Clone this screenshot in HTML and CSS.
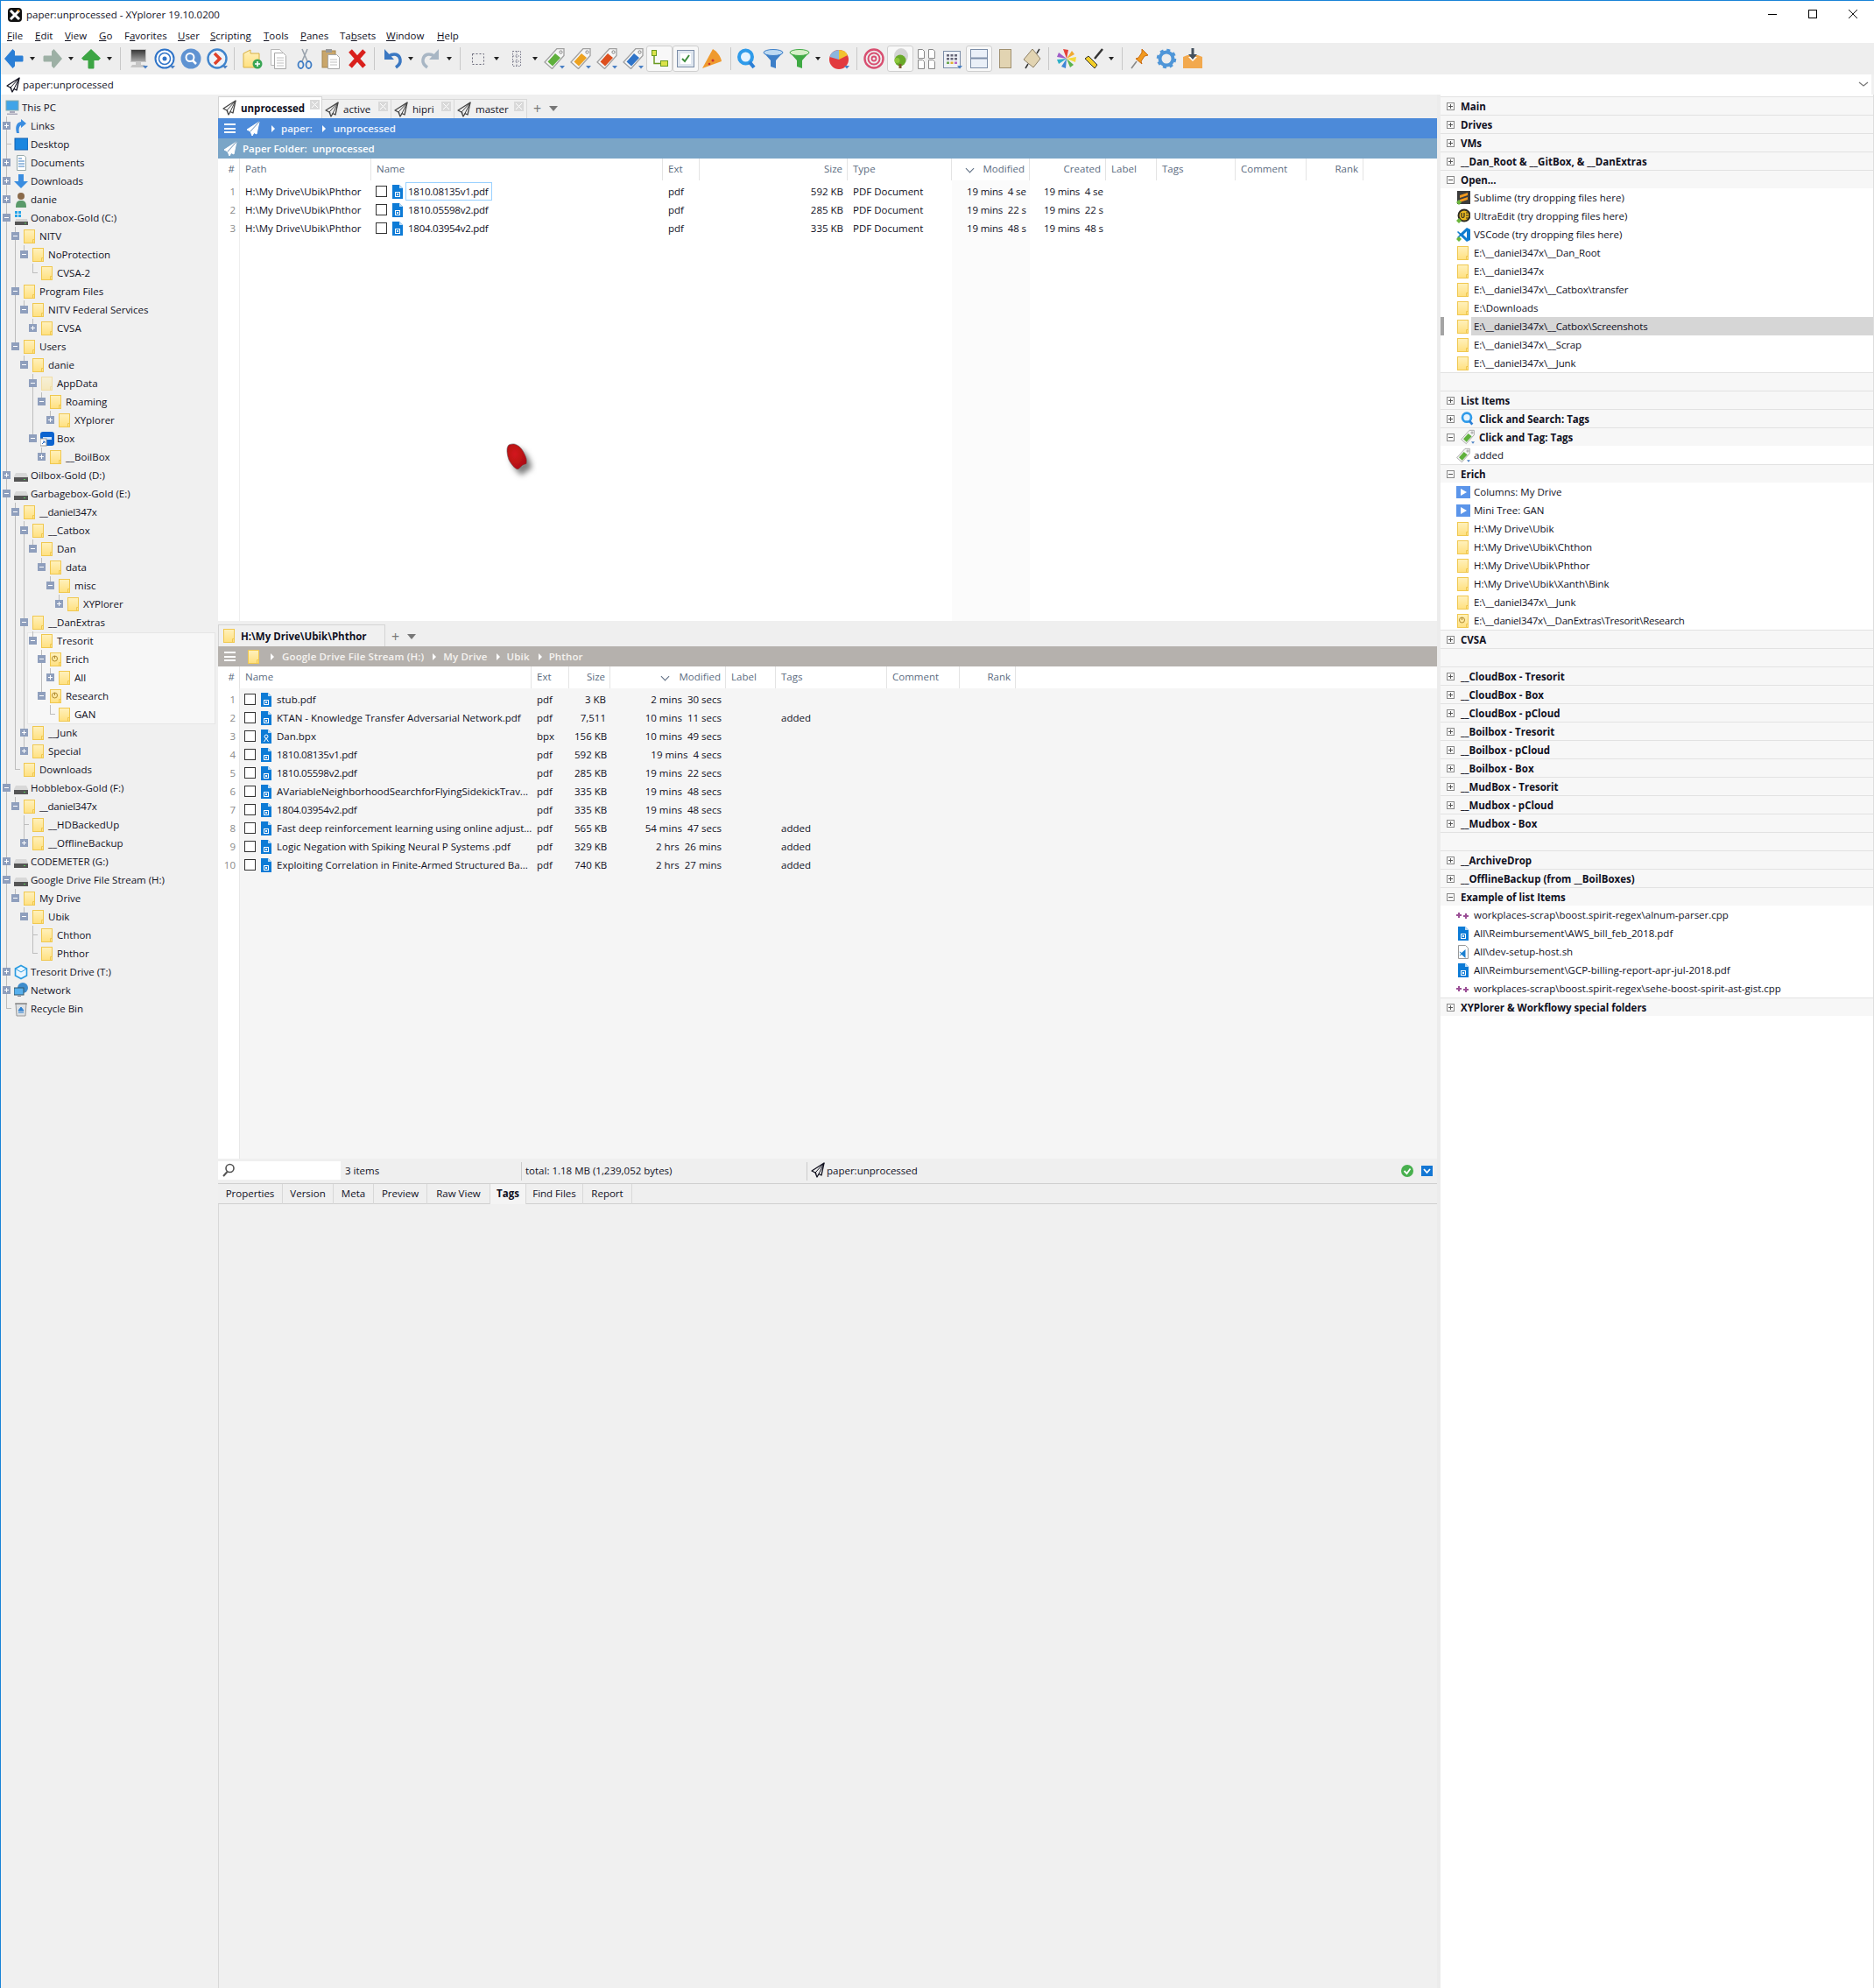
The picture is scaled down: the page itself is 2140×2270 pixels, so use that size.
FILE: index.html
```html
<!DOCTYPE html>
<html lang="en">
<head>
<meta charset="utf-8">
<title>paper:unprocessed - XYplorer 19.10.0200</title>
<link rel="stylesheet" href="styles.css">
</head>
<body>
<svg class="defs" xmlns="http://www.w3.org/2000/svg">
<defs>
<linearGradient id="fy" x1="0" y1="0" x2="0" y2="1"><stop offset="0" stop-color="#fff1bd"/><stop offset="1" stop-color="#ffe07f"/></linearGradient>
<linearGradient id="scr" x1="0" y1="0" x2="0" y2="1"><stop offset="0" stop-color="#333"/><stop offset="1" stop-color="#aaa"/></linearGradient>
<radialGradient id="blob" cx=".4" cy=".4" r=".7"><stop offset="0" stop-color="#d3151b"/><stop offset="1" stop-color="#a80f15"/></radialGradient>
<filter id="shade" x="-40%" y="-30%" width="190%" height="180%"><feDropShadow dx="5" dy="6" stdDeviation="3" flood-color="#000" flood-opacity=".5"/></filter>
<symbol id="folder" viewBox="0 0 16 18"><rect x="1.5" y="1.5" width="12" height="15" fill="url(#fy)" stroke="#f0c850"/><path d="M11.5 16.5v-4h2" fill="none" stroke="#f0c850"/></symbol>
<symbol id="lockf" viewBox="0 0 16 18"><rect x="1.5" y="1.5" width="12" height="15" fill="url(#fy)" stroke="#f0c850"/><path d="M11.5 16.5v-4h2" fill="none" stroke="#f0c850"/><circle cx="6.5" cy="8" r="3" fill="none" stroke="#b08a30"/><path d="M6.5 5v3" stroke="#b08a30"/></symbol>
<symbol id="pdf" viewBox="0 0 12 16"><path d="M0 0h8l4 4v12H0z" fill="#0d7bd6"/><path d="M8 0l4 4H8z" fill="#bcdcf6"/><rect x="3.5" y="8.5" width="5" height="5" fill="none" stroke="#fff"/><rect x="5" y="10" width="2" height="2" fill="#fff"/></symbol>
<symbol id="bpx" viewBox="0 0 12 16"><path d="M0 0h8l4 4v12H0z" fill="#0d7bd6"/><path d="M8 0l4 4H8z" fill="#bcdcf6"/><circle cx="6" cy="8" r="2" fill="none" stroke="#fff"/><path d="M3.500 14 6 10l2.500 4" fill="none" stroke="#fff"/></symbol>
<symbol id="plane" viewBox="0 0 16 18"><path d="M15 1 1 10l4 2 2 5 2-3.500 3 1.500z" fill="none" stroke="currentColor" stroke-width="1.300" stroke-linejoin="round"/><path d="M15 1 5 12l1.500 1M15 1 9 13.500" fill="none" stroke="currentColor"/></symbol>
<symbol id="planew" viewBox="0 0 16 18"><path d="M15 1 1 10l4 2 2 5 2-3.500 3 1.500z" fill="#fff" stroke="#fff" stroke-linejoin="round"/><path d="M15 1 5 12" fill="none" stroke="#6b8fb3"/></symbol>
<symbol id="back" viewBox="0 0 24 24"><path d="M1 12 10.500 1l2.500 2.500V8.500h8c1 0 1.500.5 1.500 1.500v4c0 1-.5 1.500-1.500 1.500h-8v5L10.500 23z" fill="#2b7fd6"/></symbol>
<symbol id="fwd" viewBox="0 0 24 24"><path d="M23 12 13.500 1 11 3.500V8.500H3c-1 0-1.500.5-1.500 1.500v4c0 1 .5 1.500 1.500 1.500h8v5l2.500 2.500z" fill="#9db0a5"/></symbol>
<symbol id="up" viewBox="0 0 24 24"><path d="M12 1 1 11.500 3.500 14H8.500v8c0 1 .5 1.500 1.500 1.500h4c1 0 1.500-.5 1.500-1.500v-8h5l2.500-2.500z" fill="#3ca544"/></symbol>
<symbol id="mon" viewBox="0 0 24 24"><rect x="3.500" y="1.500" width="17" height="14" fill="url(#scr)" stroke="#c8c8c8"/><path d="M9 16h6v3H9zM5 19h14l2 3H3z" fill="#c6c6c6"/><path d="M17 20h6l-3 3.500z" fill="#4a80c4"/></symbol>
<symbol id="tgt" viewBox="0 0 24 24"><circle cx="12" cy="12" r="10.500" fill="#fff" stroke="#2f74c8" stroke-width="2"/><circle cx="12" cy="12" r="6.500" fill="none" stroke="#2f74c8" stroke-width="1.500"/><circle cx="12" cy="12" r="2.500" fill="#2f74c8"/><path d="M18 20h6l-3 3.500z" fill="#4a80c4"/></symbol>
<symbol id="qc" viewBox="0 0 24 24"><circle cx="12" cy="12" r="11.500" fill="#5f93d2"/><circle cx="11" cy="10.500" r="4.500" fill="none" stroke="#fff" stroke-width="2"/><path d="M14 14l4 4" stroke="#fff" stroke-width="2.500"/></symbol>
<symbol id="rc" viewBox="0 0 24 24"><circle cx="12" cy="12" r="10.500" fill="#eef3f9" stroke="#3f84cc" stroke-width="2.400"/><path d="M9 6l6 6-6 6" fill="none" stroke="#e0412a" stroke-width="3.500"/><path d="M18 20h6l-3 3.500z" fill="#4a80c4"/></symbol>
<symbol id="nf" viewBox="0 0 24 24"><path d="M2 6l8-4v4h10v16H2z" fill="url(#fy)" stroke="#d8b040"/><circle cx="18" cy="18" r="5.500" fill="#3aa655"/><path d="M18 15v6M15 18h6" stroke="#fff" stroke-width="1.600"/></symbol>
<symbol id="copy" viewBox="0 0 24 24"><path d="M3.500 1.500h10l3 3v15h-13z" fill="#fff" stroke="#b8b8b8"/><path d="M7.500 5.500h10l3 3v15h-13z" fill="#fff" stroke="#a8a8a8"/><path d="M10 11h8M10 14h8M10 17h8M10 20h8" stroke="#c0c0c0"/></symbol>
<symbol id="cut" viewBox="0 0 24 24"><path d="M15 1 9 15M9 1l6 14" stroke="#9aa3ad" stroke-width="1.600"/><ellipse cx="7.500" cy="19" rx="3" ry="4" fill="none" stroke="#3e7cc4" stroke-width="1.800"/><ellipse cx="16.500" cy="19" rx="3" ry="4" fill="none" stroke="#3e7cc4" stroke-width="1.800"/></symbol>
<symbol id="paste" viewBox="0 0 24 24"><rect x="2" y="3" width="15" height="19" fill="#c9a66b" stroke="#a58650"/><rect x="6" y="1" width="7" height="4" fill="#999"/><path d="M8.500 7.500h10l3 3v13h-13z" fill="#fff" stroke="#a8a8a8"/><path d="M11 13h8M11 16h8M11 19h8" stroke="#c0c0c0"/></symbol>
<symbol id="del" viewBox="0 0 24 24"><path d="M4 3 20 21M20 3 4 21" stroke="#d9201c" stroke-width="5"/></symbol>
<symbol id="undo" viewBox="0 0 24 24"><path d="M8 9c6-4 12-2 13 4 .6 4-2 7-5 9" fill="none" stroke="#3b78c2" stroke-width="3.500"/><path d="M3 1v12h11z" fill="#3b78c2"/></symbol>
<symbol id="redo" viewBox="0 0 24 24"><path d="M16 9c-6-4-12-2-13 4-.6 4 2 7 5 9" fill="none" stroke="#a8b6c4" stroke-width="3.500"/><path d="M21 1v12H10z" fill="#a8b6c4"/></symbol>
<symbol id="sel" viewBox="0 0 24 24"><rect x="5.500" y="6.500" width="13" height="12" fill="none" stroke="#667" stroke-dasharray="2 2"/></symbol>
<symbol id="sgrid" viewBox="0 0 24 24"><path d="M7.500 3.500h9v17h-9zM7.500 9h9M7.500 15h9M12 3.500v17" fill="none" stroke="#778" stroke-dasharray="1.500 1.500"/></symbol>
<symbol id="tag" viewBox="0 0 24 24"><path d="M15 .5h8v8L9.500 23.500 1 16z" fill="#f6f6f6" stroke="#a0a0a0" stroke-width="1.300"/><path d="M13 6l6 5-9 9.500-5.500-5z" fill="currentColor"/><circle cx="19.500" cy="4.500" r="1.600" fill="#fff" stroke="#777"/><path d="M18 20h6l-3 3.500z" fill="#4a80c4"/></symbol>
<symbol id="nodes" viewBox="0 0 24 24"><rect x="3.500" y="2.500" width="5" height="6" fill="#dbe24a" stroke="#6a9a20"/><rect x="13.500" y="14.500" width="8" height="6" fill="#dbe24a" stroke="#6a9a20"/><path d="M6 9v8.500h7" fill="none" stroke="#6a9a20" stroke-width="1.500"/></symbol>
<symbol id="chk" viewBox="0 0 24 24"><rect x="2.500" y="2.500" width="19" height="19" fill="#dfe6ef" stroke="#7c8ea8"/><rect x="6" y="6" width="12" height="12" fill="#fff"/><path d="M8 12l3 3 5-7" fill="none" stroke="#3c8c3c" stroke-width="2"/></symbol>
<symbol id="piz" viewBox="0 0 24 24"><path d="M1 23 13 1c5 3 9 8 10 14z" fill="#ef9a2e"/><circle cx="13" cy="14" r="1.500" fill="#c33"/><circle cx="9" cy="18" r="1.300" fill="#c33"/></symbol>
<symbol id="find" viewBox="0 0 24 24"><circle cx="10.500" cy="10" r="7.500" fill="#e6f4ff" stroke="#2f9bea" stroke-width="4"/><path d="M15 16l5 6" stroke="#2b7fd6" stroke-width="4"/></symbol>
<symbol id="fb" viewBox="0 0 24 24"><path d="M1 5h22l-8 9v9l-6-2v-7z" fill="#3d7fc8"/><ellipse cx="12" cy="5" rx="11" ry="3.500" fill="#bcd9f2" stroke="#3d7fc8"/></symbol>
<symbol id="fg" viewBox="0 0 24 24"><path d="M1 5h22l-8 9v9l-6-2v-7z" fill="#3faa44"/><ellipse cx="12" cy="5" rx="11" ry="3.500" fill="#d6f0c8" stroke="#3faa44"/></symbol>
<symbol id="pie" viewBox="0 0 24 24"><circle cx="12" cy="13" r="11" fill="#e23a3e"/><path d="M12 13V2a11 9 0 0 1 10 6z" fill="#f2c230"/><path d="M12 13 1.500 10A11 9 0 0 1 12 2z" fill="#8cb6de"/><path d="M18 20h6l-3 3.500z" fill="#4a80c4"/></symbol>
<symbol id="spi" viewBox="0 0 24 24"><circle cx="12" cy="12" r="10.500" fill="none" stroke="#d84e70" stroke-width="2.400"/><circle cx="12" cy="12" r="6.500" fill="none" stroke="#d84e70" stroke-width="2"/><circle cx="12" cy="12" r="2.500" fill="none" stroke="#d84e70" stroke-width="1.800"/></symbol>
<symbol id="trees" viewBox="0 0 24 24"><ellipse cx="13" cy="9" rx="8" ry="9" fill="#d4d4d4"/><circle cx="12" cy="14" r="6.500" fill="#69a928"/><circle cx="8.500" cy="14" r="3" fill="#8cc63c"/><rect x="10.500" y="18" width="3" height="5" fill="#7b5a2c"/></symbol>
<symbol id="pages" viewBox="0 0 24 24"><path d="M2.500 1.500h5l2 2v8h-7zM14.500 1.500h5l2 2v8h-7zM2.500 13.500h5l2 2v8h-7zM14.500 13.500h5l2 2v8h-7z" fill="#fff" stroke="#888"/></symbol>
<symbol id="cgrid" viewBox="0 0 24 24"><rect x="1.500" y="3.500" width="19" height="19" fill="#eef1f6" stroke="#7c8ea8"/><path d="M5 7h3v2.500H5zM9.500 7h3v2.500h-3zM14 7h3v2.500h-3zM5 11h3v2.500H5zM9.500 11h3v2.500h-3zM14 11h3v2.500h-3z" fill="#667"/><path d="M5 15.500h3V18H5z" fill="#6aa84f"/><path d="M9.500 15.500h3V18h-3z" fill="#e0b030"/><path d="M14 15.500h3V18h-3z" fill="#b565c8"/><path d="M17 20h6l-3 3.500z" fill="#4a80c4"/></symbol>
<symbol id="panes" viewBox="0 0 24 24"><rect x="2.500" y="1.500" width="19" height="21" fill="#eaf0f8" stroke="#7c8ea8"/><path d="M2.500 11.500h19" stroke="#7c8ea8" stroke-width="2"/></symbol>
<symbol id="bei" viewBox="0 0 24 24"><rect x="5.500" y="1.500" width="13" height="21" fill="#e2d4b2" stroke="#a09070"/></symbol>
<symbol id="rot" viewBox="0 0 24 24"><path d="M13 1l9 11-8 10L3 13z" fill="#e2d4b2" stroke="#8d8065"/><path d="M21 1l-3 5M5 23l3-5" stroke="#333" stroke-width="1.500"/></symbol>
<symbol id="wheel" viewBox="0 0 24 24"><path d="M12 12 8 1l6 1z" fill="#e4433a"/><path d="M12 12l6-9 3 4z" fill="#f0a92f"/><path d="M12 12l11-2-1 6z" fill="#f4d93c"/><path d="M12 12l8 7-4 3z" fill="#5ab24b"/><path d="M12 12l-1 11-5-2z" fill="#3f86d6"/><path d="M12 12 3 18l-2-5z" fill="#2fb0c8"/><path d="M12 12 1 10l2-5z" fill="#a05cc8"/></symbol>
<symbol id="brush" viewBox="0 0 24 24"><path d="M23 1 14 12" stroke="#333" stroke-width="2.500"/><path d="M3 12 7 9l10 10-3 4z" fill="#f2cd28" stroke="#333"/></symbol>
<symbol id="pin" viewBox="0 0 24 24"><path d="M14 1l7 7-4 1-4 6 1 3-7-6 3-1 4-6z" fill="#f29a1e" stroke="#c86a10"/><path d="M8 15 2 23" stroke="#888" stroke-width="1.500"/></symbol>
<symbol id="gear" viewBox="0 0 24 24"><circle cx="12" cy="12" r="7.500" fill="none" stroke="#4f96d8" stroke-width="4"/><circle cx="12" cy="12" r="10" fill="none" stroke="#4f96d8" stroke-width="2.500" stroke-dasharray="4 3.850"/></symbol>
<symbol id="dbox" viewBox="0 0 24 24"><path d="M1 10l5-2h12l5 2v13H1z" fill="#f2a94e"/><path d="M7 10h10l-5 5z" fill="#fff"/><path d="M10.500 0h3v7H17l-5 6-5-6h3.500z" fill="#44515e"/></symbol>
<symbol id="pc" viewBox="0 0 16 18"><rect x="1" y="1" width="14" height="11" fill="#3fa4e8" stroke="#8aa"/><path d="M5 13h6v2H5zM2 15.500h12v1.500H2z" fill="#aab"/></symbol>
<symbol id="links" viewBox="0 0 16 18"><path d="M3 17c-2-8 0-12 5-13V1l6 5-6 5V8c-2 1-3 4-2 9z" fill="#3a8de0"/></symbol>
<symbol id="desk" viewBox="0 0 16 18"><rect x="1" y="2" width="15" height="13" fill="#1a86e0" stroke="#0e5fb0"/></symbol>
<symbol id="docs" viewBox="0 0 16 18"><path d="M3.500 .5h8l2 2v15h-10z" fill="#fff" stroke="#9aa"/><path d="M5 4h4M5 7h7M5 10h7M5 13h7" stroke="#3a7cc0"/></symbol>
<symbol id="down" viewBox="0 0 16 18"><path d="M5 1h6v8h5l-8 8-8-8h5z" fill="#3a8de0"/></symbol>
<symbol id="user" viewBox="0 0 16 18"><circle cx="8" cy="5" r="4" fill="#8a6a4a"/><path d="M2 18c0-7 2-8 6-8s6 1 6 8z" fill="#5a9a6a"/></symbol>
<symbol id="sys" viewBox="0 0 16 18"><path d="M2 10h13l1 4v3H1v-3z" fill="#d4d4d4"/><rect x="1" y="13" width="15" height="4" fill="#555"/><rect x="12" y="14.500" width="2" height="1" fill="#5c5"/><path d="M1 1h3v3H1zM5 1h3v3H5zM1 5h3v3H1zM5 5h3v3H5z" fill="#27a4e8"/></symbol>
<symbol id="drv" viewBox="0 0 16 18"><path d="M2 6h12l2 4v6H0v-6z" fill="#d8d8d8"/><rect x="0" y="11" width="16" height="5" fill="#555"/><rect x="11" y="13" width="2" height="1" fill="#5c5"/></symbol>
<symbol id="box" viewBox="0 0 16 18"><rect x="0" y="1" width="16" height="16" rx="3" fill="#0b63cf"/><path d="M3 7h10v3H3z" fill="#cfe3fa"/><rect x="0" y="9" width="7" height="8" fill="#fff" stroke="#999"/><path d="M2 15l3-3M3 12h2v2" fill="none" stroke="#2a6ac0"/></symbol>
<symbol id="hex" viewBox="0 0 16 18"><path d="M8 1.500 14.500 5v8L8 16.500 1.500 13V5z" fill="#eaf6ff" stroke="#2a9be0" stroke-width="1.600"/><path d="M1.500 5 8 9l6.500-4" fill="none" stroke="#2a9be0"/></symbol>
<symbol id="net" viewBox="0 0 16 18"><circle cx="10" cy="6" r="6" fill="#3d8ccc"/><rect x="0" y="6" width="11" height="8" fill="#57b0ee" stroke="#356"/><path d="M4 15h4v1H4z" fill="#889"/></symbol>
<symbol id="bin" viewBox="0 0 16 18"><path d="M2 3h12l-1 14H3z" fill="#dce0e4" stroke="#999"/><path d="M1 3h14" stroke="#777"/><path d="M8 7l3 4H5zM5 13h6" fill="#2a7ed0" stroke="#2a7ed0"/></symbol>
<symbol id="subl" viewBox="0 0 16 18"><rect x="1" y="1" width="15" height="15" fill="#3c3c3c"/><path d="M4 6 13 3v3L4 9zM13 8v3l-9 3v-3z" fill="#f39a1e"/><path d="M0 14l3-3 3 3-3 3z" fill="#6bb53c"/></symbol>
<symbol id="ue" viewBox="0 0 16 18"><circle cx="9" cy="8" r="7.500" fill="#2d2a20"/><circle cx="9" cy="8" r="5.500" fill="#e8b820"/><path d="M6 5v4c0 2 3 2 3 0V5M11 5h3M11 8h3M11 11h3" fill="none" stroke="#2d2a20" stroke-width="1.200"/><path d="M0 14l3-3 3 3-3 3z" fill="#6bb53c"/></symbol>
<symbol id="vsc" viewBox="0 0 16 18"><path d="M12 1l4 2v12l-4 2L5 10.500 2 13l-1-1 3-3-3-3 1-1 3 2.500z" fill="#0f7cd0"/><path d="M12 5 8 9l4 4z" fill="#fff"/><path d="M0 14l3-3 3 3-3 3z" fill="#6bb53c"/></symbol>
<symbol id="play" viewBox="0 0 16 18"><rect x="0" y="2" width="16" height="14" fill="#5b95ea"/><path d="M5 5l7 4-7 4z" fill="#fff"/></symbol>
<symbol id="cpp" viewBox="0 0 16 18"><path d="M2 6h2v2h2v2H4v2H2v-2H0V8h2zM10 7h2v2h2v2h-2v2h-2v-2H8V9h2z" fill="#9b4f96"/></symbol>
<symbol id="sh" viewBox="0 0 12 16"><path d="M.5.500h8l3 3v12H.5z" fill="#fff" stroke="#999"/><path d="M8.500 5 4 9l-2-1.500L1.500 8 3.500 10l-2 2 .5.500 2-1.500 4.500 4z" fill="#1a7fd0"/></symbol>
<symbol id="xy" viewBox="0 0 16 16"><rect width="16" height="16" rx="4" fill="#111"/><path d="M3 3l10 10M13 3 3 13" stroke="#fff" stroke-width="3"/><path d="M10 2h3v3z" fill="#e89020"/></symbol>
</defs>
</svg>

<div class="app">
  <header class="title">
    <svg class="logo"><use href="#xy"/></svg>
    <span class="ttext">paper:unprocessed - XYplorer 19.10.0200</span>
    <div class="wins">
      <svg class="wbtn"><path d="M0 5.500h10" stroke="#000"/></svg>
      <svg class="wbtn"><rect x=".5" y=".5" width="9" height="9" fill="none" stroke="#000"/></svg>
      <svg class="wbtn"><path d="M0 0l10 10M10 0 0 10" stroke="#111"/></svg>
    </div>
  </header>
  <nav class="menu">
    <span><u>F</u>ile</span><span><u>E</u>dit</span><span><u>V</u>iew</span><span><u>G</u>o</span><span>F<u>a</u>vorites</span><span><u>U</u>ser</span><span><u>S</u>cripting</span><span><u>T</u>ools</span><span><u>P</u>anes</span><span>Ta<u>b</u>sets</span><span><u>W</u>indow</span><span><u>H</u>elp</span>
  </nav>
  <div class="tools">
    <b class="c"><svg><use href="#back"/></svg></b><i class="dd"></i>
    <b class="c g"><svg><use href="#fwd"/></svg></b><i class="dd"></i>
    <b class="c g"><svg><use href="#up"/></svg></b><i class="dd"></i><i class="sp w12"></i>
    <b class="c"><svg><use href="#mon"/></svg></b><b class="c"><svg><use href="#tgt"/></svg></b><b class="c"><svg><use href="#qc"/></svg></b><b class="c"><svg><use href="#rc"/></svg></b><i class="sp"></i>
    <b class="c g"><svg><use href="#nf"/></svg></b><b class="c"><svg><use href="#copy"/></svg></b><b class="c"><svg><use href="#cut"/></svg></b><b class="c"><svg><use href="#paste"/></svg></b><b class="c"><svg><use href="#del"/></svg></b><i class="sp"></i>
    <b class="c g"><svg><use href="#undo"/></svg></b><i class="dd"></i>
    <b class="c g"><svg><use href="#redo"/></svg></b><i class="dd"></i><i class="sp w12"></i>
    <b class="c"><svg><use href="#sel"/></svg></b><i class="dd"></i>
    <b class="c g"><svg><use href="#sgrid"/></svg></b><i class="dd"></i>
    <b class="c h1 tg"><svg><use href="#tag"/></svg></b><b class="c to"><svg><use href="#tag"/></svg></b><b class="c tr"><svg><use href="#tag"/></svg></b><b class="c tb"><svg><use href="#tag"/></svg></b>
    <b class="c on"><svg><use href="#nodes"/></svg></b><b class="c on"><svg><use href="#chk"/></svg></b><b class="c"><svg><use href="#piz"/></svg></b><i class="sp g"></i>
    <b class="c"><svg><use href="#find"/></svg></b><b class="c"><svg><use href="#fb"/></svg></b><b class="c"><svg><use href="#fg"/></svg></b><i class="dd"></i>
    <b class="c h3"><svg><use href="#pie"/></svg></b><i class="sp w10"></i>
    <b class="c"><svg><use href="#spi"/></svg></b><b class="c on"><svg><use href="#trees"/></svg></b><b class="c"><svg><use href="#pages"/></svg></b><b class="c"><svg><use href="#cgrid"/></svg></b><b class="c on"><svg><use href="#panes"/></svg></b><b class="c"><svg><use href="#bei"/></svg></b><b class="c"><svg><use href="#rot"/></svg></b><i class="sp"></i>
    <b class="c g"><svg><use href="#wheel"/></svg></b><b class="c"><svg><use href="#brush"/></svg></b><i class="dd"></i><i class="sp w12"></i>
    <b class="c"><svg><use href="#pin"/></svg></b><b class="c"><svg><use href="#gear"/></svg></b><b class="c"><svg><use href="#dbox"/></svg></b>
  </div>
  <div class="addr">
    <svg class="ic"><use href="#plane"/></svg><span>paper:unprocessed</span>
    <svg class="chev"><path d="M1 1l5 4 5-4" fill="none" stroke="#777" stroke-width="1.300"/></svg>
  </div>
  <main class="main">
    <aside class="tree">
      <div class="hl"></div>
      <div class="n"><svg class="ic"><use href="#pc"/></svg><span>This PC</span></div>
      <div class="n"><b class="p"></b><svg class="ic"><use href="#links"/></svg><span>Links</span></div>
      <div class="n"><b class="t"></b><svg class="ic"><use href="#desk"/></svg><span>Desktop</span></div>
      <div class="n"><b class="p"></b><svg class="ic"><use href="#docs"/></svg><span>Documents</span></div>
      <div class="n"><b class="p"></b><svg class="ic"><use href="#down"/></svg><span>Downloads</span></div>
      <div class="n"><b class="p"></b><svg class="ic"><use href="#user"/></svg><span>danie</span></div>
      <div class="n"><b class="m"></b><svg class="ic"><use href="#sys"/></svg><span>Oonabox-Gold (C:)</span></div>
      <div class="n"><i class="v"></i><b class="m"></b><svg class="ic"><use href="#folder"/></svg><span>NITV</span></div>
      <div class="n"><i class="v"></i><i class="v"></i><b class="lm"></b><svg class="ic"><use href="#folder"/></svg><span>NoProtection</span></div>
      <div class="n"><i class="v"></i><i class="v"></i><i></i><b class="l"></b><svg class="ic"><use href="#folder"/></svg><span>CVSA-2</span></div>
      <div class="n"><i class="v"></i><b class="m"></b><svg class="ic"><use href="#folder"/></svg><span>Program Files</span></div>
      <div class="n"><i class="v"></i><i class="v"></i><b class="lm"></b><svg class="ic"><use href="#folder"/></svg><span>NITV Federal Services</span></div>
      <div class="n"><i class="v"></i><i class="v"></i><i></i><b class="lp"></b><svg class="ic"><use href="#folder"/></svg><span>CVSA</span></div>
      <div class="n"><i class="v"></i><b class="lm"></b><svg class="ic"><use href="#folder"/></svg><span>Users</span></div>
      <div class="n"><i class="v"></i><i></i><b class="lm"></b><svg class="ic"><use href="#folder"/></svg><span>danie</span></div>
      <div class="n"><i class="v"></i><i></i><i></i><b class="m"></b><svg class="ic faded"><use href="#folder"/></svg><span>AppData</span></div>
      <div class="n"><i class="v"></i><i></i><i></i><i class="v"></i><b class="lm"></b><svg class="ic"><use href="#folder"/></svg><span>Roaming</span></div>
      <div class="n"><i class="v"></i><i></i><i></i><i class="v"></i><i></i><b class="lp"></b><svg class="ic"><use href="#folder"/></svg><span>XYplorer</span></div>
      <div class="n"><i class="v"></i><i></i><i></i><b class="lm"></b><svg class="ic"><use href="#box"/></svg><span>Box</span></div>
      <div class="n"><i class="v"></i><i></i><i></i><i></i><b class="lp"></b><svg class="ic"><use href="#folder"/></svg><span>__BoilBox</span></div>
      <div class="n"><b class="p"></b><svg class="ic"><use href="#drv"/></svg><span>Oilbox-Gold (D:)</span></div>
      <div class="n"><b class="m"></b><svg class="ic"><use href="#drv"/></svg><span>Garbagebox-Gold (E:)</span></div>
      <div class="n"><i class="v"></i><b class="m"></b><svg class="ic"><use href="#folder"/></svg><span class="dg">__daniel347x</span></div>
      <div class="n"><i class="v"></i><i class="v"></i><b class="m"></b><svg class="ic"><use href="#folder"/></svg><span>__Catbox</span></div>
      <div class="n"><i class="v"></i><i class="v"></i><i class="v"></i><b class="lm"></b><svg class="ic"><use href="#folder"/></svg><span>Dan</span></div>
      <div class="n"><i class="v"></i><i class="v"></i><i class="v"></i><i></i><b class="lm"></b><svg class="ic"><use href="#folder"/></svg><span>data</span></div>
      <div class="n"><i class="v"></i><i class="v"></i><i class="v"></i><i></i><i></i><b class="lm"></b><svg class="ic"><use href="#folder"/></svg><span>misc</span></div>
      <div class="n"><i class="v"></i><i class="v"></i><i class="v"></i><i></i><i></i><i></i><b class="lp"></b><svg class="ic"><use href="#folder"/></svg><span>XYPlorer</span></div>
      <div class="n"><i class="v"></i><i class="v"></i><b class="m"></b><svg class="ic"><use href="#folder"/></svg><span>__DanExtras</span></div>
      <div class="n"><i class="v"></i><i class="v"></i><i class="v"></i><b class="lm"></b><svg class="ic"><use href="#folder"/></svg><span>Tresorit</span></div>
      <div class="n"><i class="v"></i><i class="v"></i><i class="v"></i><i></i><b class="m"></b><svg class="ic"><use href="#lockf"/></svg><span>Erich</span></div>
      <div class="n"><i class="v"></i><i class="v"></i><i class="v"></i><i></i><i class="v"></i><b class="lp"></b><svg class="ic"><use href="#folder"/></svg><span>All</span></div>
      <div class="n"><i class="v"></i><i class="v"></i><i class="v"></i><i></i><b class="lm"></b><svg class="ic"><use href="#lockf"/></svg><span>Research</span></div>
      <div class="n"><i class="v"></i><i class="v"></i><i class="v"></i><i></i><i></i><b class="l"></b><svg class="ic"><use href="#folder"/></svg><span>GAN</span></div>
      <div class="n"><i class="v"></i><i class="v"></i><b class="p"></b><svg class="ic"><use href="#folder"/></svg><span>__Junk</span></div>
      <div class="n"><i class="v"></i><i class="v"></i><b class="lp"></b><svg class="ic"><use href="#folder"/></svg><span>Special</span></div>
      <div class="n"><i class="v"></i><b class="l"></b><svg class="ic"><use href="#folder"/></svg><span>Downloads</span></div>
      <div class="n"><b class="m"></b><svg class="ic"><use href="#drv"/></svg><span>Hobblebox-Gold (F:)</span></div>
      <div class="n"><i class="v"></i><b class="lm"></b><svg class="ic"><use href="#folder"/></svg><span class="dg">__daniel347x</span></div>
      <div class="n"><i class="v"></i><i></i><b class="t"></b><svg class="ic"><use href="#folder"/></svg><span>__HDBackedUp</span></div>
      <div class="n"><i class="v"></i><i></i><b class="lp"></b><svg class="ic"><use href="#folder"/></svg><span>__OfflineBackup</span></div>
      <div class="n"><b class="p"></b><svg class="ic"><use href="#drv"/></svg><span>CODEMETER (G:)</span></div>
      <div class="n"><b class="m"></b><svg class="ic"><use href="#drv"/></svg><span>Google Drive File Stream (H:)</span></div>
      <div class="n"><i class="v"></i><b class="lm"></b><svg class="ic"><use href="#folder"/></svg><span>My Drive</span></div>
      <div class="n"><i class="v"></i><i></i><b class="lm"></b><svg class="ic"><use href="#folder"/></svg><span>Ubik</span></div>
      <div class="n"><i class="v"></i><i></i><i></i><b class="t"></b><svg class="ic"><use href="#folder"/></svg><span>Chthon</span></div>
      <div class="n"><i class="v"></i><i></i><i></i><b class="l"></b><svg class="ic"><use href="#folder"/></svg><span>Phthor</span></div>
      <div class="n"><b class="p"></b><svg class="ic"><use href="#hex"/></svg><span>Tresorit Drive (T:)</span></div>
      <div class="n"><b class="p"></b><svg class="ic"><use href="#net"/></svg><span>Network</span></div>
      <div class="n"><b class="l"></b><svg class="ic"><use href="#bin"/></svg><span>Recycle Bin</span></div>
    </aside>

    <section class="center">
      <div class="tabs">
        <div class="tab act w1"><svg class="ic"><use href="#plane"/></svg><span>unprocessed</span><em class="x"></em></div>
        <div class="tab w2"><svg class="ic"><use href="#plane"/></svg><span>active</span><em class="x"></em></div>
        <div class="tab w3"><svg class="ic"><use href="#plane"/></svg><span>hipri</span><em class="x"></em></div>
        <div class="tab w4"><svg class="ic"><use href="#plane"/></svg><span>master</span><em class="x"></em></div>
        <span class="plus">+</span><i class="tri"></i>
      </div>
      <div class="bar blue">
        <i class="burger"></i><svg class="ic b1"><use href="#planew"/></svg>
        <i class="ar a1"></i><span class="s1">paper:</span><i class="ar a2"></i><span class="s2">unprocessed</span>
      </div>
      <div class="bar steel"><svg class="ic b2"><use href="#planew"/></svg><span>Paper Folder:&nbsp; unprocessed</span></div>
      <div class="hdr g1">
        <span class="r">#</span><span>Path</span><span>Name</span><span>Ext</span><span class="r">Size</span><span>Type</span><span class="r srt">Modified</span><span class="r">Created</span><span>Label</span><span>Tags</span><span>Comment</span><span class="r">Rank</span>
      </div>
      <div class="list one">
        <div class="row g1"><span class="num">1</span><span>H:\My Drive\Ubik\Phthor</span><span class="nm"><i class="cb"></i><svg class="doc"><use href="#pdf"/></svg><span class="foc dg">1810.08135v1.pdf</span></span><span>pdf</span><span class="r">592 KB</span><span>PDF Document</span><span class="mod">19 mins&nbsp; 4 se</span><span class="cre">19 mins&nbsp; 4 se</span></div>
        <div class="row g1"><span class="num">2</span><span>H:\My Drive\Ubik\Phthor</span><span class="nm"><i class="cb"></i><svg class="doc"><use href="#pdf"/></svg><span class="dg">1810.05598v2.pdf</span></span><span>pdf</span><span class="r">285 KB</span><span>PDF Document</span><span class="mod">19 mins&nbsp; 22 s</span><span class="cre">19 mins&nbsp; 22 s</span></div>
        <div class="row g1"><span class="num">3</span><span>H:\My Drive\Ubik\Phthor</span><span class="nm"><i class="cb"></i><svg class="doc"><use href="#pdf"/></svg><span class="dg">1804.03954v2.pdf</span></span><span>pdf</span><span class="r">335 KB</span><span>PDF Document</span><span class="mod">19 mins&nbsp; 48 s</span><span class="cre">19 mins&nbsp; 48 s</span></div>
      </div>
      <div class="tabs two">
        <div class="tab act w5"><svg class="ic"><use href="#folder"/></svg><span>H:\My Drive\Ubik\Phthor</span></div>
        <span class="plus">+</span><i class="tri"></i>
      </div>
      <div class="bar taupe">
        <i class="burger"></i><svg class="ic b3"><use href="#folder"/></svg>
        <i class="ar c1"></i><span>Google Drive File Stream (H:)</span><i class="ar c2"></i><span>My Drive</span><i class="ar c2"></i><span>Ubik</span><i class="ar c2"></i><span>Phthor</span>
      </div>
      <div class="hdr g2">
        <span class="r">#</span><span>Name</span><span>Ext</span><span class="r">Size</span><span class="r srt">Modified</span><span>Label</span><span>Tags</span><span>Comment</span><span class="r">Rank</span>
      </div>
      <div class="list low">
        <div class="row g2"><span class="num">1</span><span class="nm"><i class="cb"></i><svg class="doc"><use href="#pdf"/></svg><span>stub.pdf</span></span><span>pdf</span><span class="r">3 KB</span><span class="r">2 mins&nbsp; 30 secs</span><span></span><span></span></div>
        <div class="row g2"><span class="num">2</span><span class="nm"><i class="cb"></i><svg class="doc"><use href="#pdf"/></svg><span>KTAN - Knowledge Transfer Adversarial Network.pdf</span></span><span>pdf</span><span class="r">7,511</span><span class="r">10 mins&nbsp; 11 secs</span><span></span><span>added</span></div>
        <div class="row g2"><span class="num">3</span><span class="nm"><i class="cb"></i><svg class="doc"><use href="#bpx"/></svg><span>Dan.bpx</span></span><span>bpx</span><span class="r">156 KB</span><span class="r">10 mins&nbsp; 49 secs</span><span></span><span></span></div>
        <div class="row g2"><span class="num">4</span><span class="nm"><i class="cb"></i><svg class="doc"><use href="#pdf"/></svg><span class="dg">1810.08135v1.pdf</span></span><span>pdf</span><span class="r">592 KB</span><span class="r">19 mins&nbsp; 4 secs</span><span></span><span></span></div>
        <div class="row g2"><span class="num">5</span><span class="nm"><i class="cb"></i><svg class="doc"><use href="#pdf"/></svg><span class="dg">1810.05598v2.pdf</span></span><span>pdf</span><span class="r">285 KB</span><span class="r">19 mins&nbsp; 22 secs</span><span></span><span></span></div>
        <div class="row g2"><span class="num">6</span><span class="nm"><i class="cb"></i><svg class="doc"><use href="#pdf"/></svg><span>AVariableNeighborhoodSearchforFlyingSidekickTrav...</span></span><span>pdf</span><span class="r">335 KB</span><span class="r">19 mins&nbsp; 48 secs</span><span></span><span></span></div>
        <div class="row g2"><span class="num">7</span><span class="nm"><i class="cb"></i><svg class="doc"><use href="#pdf"/></svg><span class="dg">1804.03954v2.pdf</span></span><span>pdf</span><span class="r">335 KB</span><span class="r">19 mins&nbsp; 48 secs</span><span></span><span></span></div>
        <div class="row g2"><span class="num">8</span><span class="nm"><i class="cb"></i><svg class="doc"><use href="#pdf"/></svg><span>Fast deep reinforcement learning using online adjust...</span></span><span>pdf</span><span class="r">565 KB</span><span class="r">54 mins&nbsp; 47 secs</span><span></span><span>added</span></div>
        <div class="row g2"><span class="num">9</span><span class="nm"><i class="cb"></i><svg class="doc"><use href="#pdf"/></svg><span>Logic Negation with Spiking Neural P Systems .pdf</span></span><span>pdf</span><span class="r">329 KB</span><span class="r">2 hrs&nbsp; 26 mins</span><span></span><span>added</span></div>
        <div class="row g2"><span class="num">10</span><span class="nm"><i class="cb"></i><svg class="doc"><use href="#pdf"/></svg><span>Exploiting Correlation in Finite-Armed Structured Ba...</span></span><span>pdf</span><span class="r">740 KB</span><span class="r">2 hrs&nbsp; 27 mins</span><span></span><span>added</span></div>
      </div>
      <div class="status">
        <div class="sbox"><svg class="mag"><circle cx="9.500" cy="6" r="4.500" fill="none" stroke="#555" stroke-width="1.600"/><path d="M6.500 10 2 15" stroke="#555" stroke-width="2"/></svg></div>
        <span class="st1">3 items</span>
        <span class="st2">total: 1.18 MB (1,239,052 bytes)</span>
        <span class="st3"><svg class="ic"><use href="#plane"/></svg>paper:unprocessed</span>
        <span class="st4">
          <svg class="stico"><circle cx="7" cy="7" r="7" fill="#48b04e"/><path d="M3.500 7l3 3 4-5.500" fill="none" stroke="#fff" stroke-width="1.800"/></svg>
          <svg class="stico"><rect x="0" y="1" width="13" height="12" fill="#1477d4"/><path d="M3 5l3.500 4L10 5" fill="none" stroke="#fff" stroke-width="1.800"/></svg>
        </span>
      </div>
      <div class="itabs">
        <span class="w74">Properties</span><span class="w58">Version</span><span class="w46">Meta</span><span class="w61">Preview</span><span class="w72">Raw View</span><span class="on w41">Tags</span><span class="w65">Find Files</span><span class="w56">Report</span>
      </div>
      <div class="ipanel"></div>
      <svg class="blob" viewBox="0 0 23 30"><path d="M2 1C5-.5 9-.5 11 1c5 2 9 9 11 15 .8 3 .6 6 0 7-2 0-3.500 1-5 2-2 2-4 4-5 4-3-1-7-5-10-11C.5 14-.3 9 0 6c0-2 1-4 2-5z" fill="url(#blob)" stroke="#666" stroke-width=".6" filter="url(#shade)"/></svg>
    </section>
    <div class="gut"></div>
    <aside class="cat">
      <div class="h"><i class="bx p2"></i><span>Main</span></div>
      <div class="h"><i class="bx p2"></i><span>Drives</span></div>
      <div class="h"><i class="bx p2"></i><span>VMs</span></div>
      <div class="h"><i class="bx p2"></i><span>__Dan_Root &amp; __GitBox, &amp; __DanExtras</span></div>
      <div class="h"><i class="bx"></i><span>Open...</span></div>
      <div class="it"><svg class="ic"><use href="#subl"/></svg><span>Sublime (try dropping files here)</span></div>
      <div class="it"><svg class="ic"><use href="#ue"/></svg><span>UltraEdit (try dropping files here)</span></div>
      <div class="it"><svg class="ic"><use href="#vsc"/></svg><span>VSCode (try dropping files here)</span></div>
      <div class="it ep"><svg class="ic"><use href="#folder"/></svg><span>E:\__daniel347x\__Dan_Root</span></div>
      <div class="it ep"><svg class="ic"><use href="#folder"/></svg><span>E:\__daniel347x</span></div>
      <div class="it ep"><svg class="ic"><use href="#folder"/></svg><span>E:\__daniel347x\__Catbox\transfer</span></div>
      <div class="it"><svg class="ic"><use href="#folder"/></svg><span>E:\Downloads</span></div>
      <div class="it ep sel"><svg class="ic"><use href="#folder"/></svg><span>E:\__daniel347x\__Catbox\Screenshots</span></div>
      <div class="it ep"><svg class="ic"><use href="#folder"/></svg><span>E:\__daniel347x\__Scrap</span></div>
      <div class="it ep"><svg class="ic"><use href="#folder"/></svg><span>E:\__daniel347x\__Junk</span></div>
      <div class="h"></div>
      <div class="h"><i class="bx p2"></i><span>List Items</span></div>
      <div class="h"><i class="bx p2"></i><svg class="ic hi"><use href="#find"/></svg><span>Click and Search: Tags</span></div>
      <div class="h"><i class="bx"></i><svg class="ic hi tg"><use href="#tag"/></svg><span>Click and Tag: Tags</span></div>
      <div class="it"><svg class="ic tg"><use href="#tag"/></svg><span>added</span></div>
      <div class="h"><i class="bx"></i><span>Erich</span></div>
      <div class="it"><svg class="ic"><use href="#play"/></svg><span>Columns: My Drive</span></div>
      <div class="it"><svg class="ic"><use href="#play"/></svg><span>Mini Tree: GAN</span></div>
      <div class="it"><svg class="ic"><use href="#folder"/></svg><span>H:\My Drive\Ubik</span></div>
      <div class="it"><svg class="ic"><use href="#folder"/></svg><span>H:\My Drive\Ubik\Chthon</span></div>
      <div class="it"><svg class="ic"><use href="#folder"/></svg><span>H:\My Drive\Ubik\Phthor</span></div>
      <div class="it"><svg class="ic"><use href="#folder"/></svg><span>H:\My Drive\Ubik\Xanth\Bink</span></div>
      <div class="it ep"><svg class="ic"><use href="#folder"/></svg><span>E:\__daniel347x\__Junk</span></div>
      <div class="it ep2"><svg class="ic"><use href="#lockf"/></svg><span>E:\__daniel347x\__DanExtras\Tresorit\Research</span></div>
      <div class="h"><i class="bx p2"></i><span>CVSA</span></div>
      <div class="h"></div>
      <div class="h"><i class="bx p2"></i><span>__CloudBox - Tresorit</span></div>
      <div class="h"><i class="bx p2"></i><span>__CloudBox - Box</span></div>
      <div class="h"><i class="bx p2"></i><span>__CloudBox - pCloud</span></div>
      <div class="h"><i class="bx p2"></i><span>__Boilbox - Tresorit</span></div>
      <div class="h"><i class="bx p2"></i><span>__Boilbox - pCloud</span></div>
      <div class="h"><i class="bx p2"></i><span>__Boilbox - Box</span></div>
      <div class="h"><i class="bx p2"></i><span>__MudBox - Tresorit</span></div>
      <div class="h"><i class="bx p2"></i><span>__Mudbox - pCloud</span></div>
      <div class="h"><i class="bx p2"></i><span>__Mudbox - Box</span></div>
      <div class="h"></div>
      <div class="h"><i class="bx p2"></i><span>__ArchiveDrop</span></div>
      <div class="h"><i class="bx p2"></i><span>__OfflineBackup (from __BoilBoxes)</span></div>
      <div class="h"><i class="bx"></i><span>Example of list Items</span></div>
      <div class="it"><svg class="ic"><use href="#cpp"/></svg><span>workplaces-scrap\boost.spirit-regex\alnum-parser.cpp</span></div>
      <div class="it"><svg class="doc2"><use href="#pdf"/></svg><span>All\Reimbursement\AWS_bill_feb_2018.pdf</span></div>
      <div class="it"><svg class="doc2"><use href="#sh"/></svg><span>All\dev-setup-host.sh</span></div>
      <div class="it"><svg class="doc2"><use href="#pdf"/></svg><span>All\Reimbursement\GCP-billing-report-apr-jul-2018.pdf</span></div>
      <div class="it"><svg class="ic"><use href="#cpp"/></svg><span>workplaces-scrap\boost.spirit-regex\sehe-boost-spirit-ast-gist.cpp</span></div>
      <div class="h"><i class="bx p2"></i><span>XYPlorer &amp; Workflowy special folders</span></div>
    </aside>
  </main>
</div>
</body>
</html>
```

FILE: styles.css
```css
* { box-sizing: border-box; }
html, body { margin: 0; padding: 0; }
body {
  width: 2140px; height: 2270px; overflow: hidden; background: #f0f0f0;
  font-family: "Open Sans", "Noto Sans", "Liberation Sans", sans-serif;
  font-size: 11.5px; color: #10101e; line-height: 21px;
}
.defs { position: absolute; width: 0; height: 0; }
.app { width: 2140px; height: 2270px; border-top: 1px solid #1883d7; border-left: 1px solid #1883d7; display: flex; flex-direction: column; }
i, b, em { font-style: normal; font-weight: normal; }
.dg { letter-spacing: -.25px; }
.ep > span { letter-spacing: -.15px; }
.ep2 > span { letter-spacing: -.22px; }

.title { height: 31px; background: #fff; display: flex; align-items: center; }
.logo { width: 16px; height: 16px; margin-left: 8px; }
.ttext { margin-left: 5px; line-height: 29px; }
.wins { margin-left: auto; display: flex; gap: 36px; padding-right: 19px; align-items: center; }
.wbtn { width: 10px; height: 11px; }

.menu { height: 17px; background: #fff; display: flex; padding-left: 7px; line-height: 18px; }
.menu span:nth-child(1) { width: 32px; }
.menu span:nth-child(2) { width: 34px; }
.menu span:nth-child(3) { width: 39px; }
.menu span:nth-child(4) { width: 29px; }
.menu span:nth-child(5) { width: 61px; }
.menu span:nth-child(6) { width: 37px; }
.menu span:nth-child(7) { width: 61px; }
.menu span:nth-child(8) { width: 42px; }
.menu span:nth-child(9) { width: 45px; }
.menu span:nth-child(10) { width: 53px; }
.menu span:nth-child(11) { width: 58px; }

.tools { height: 36px; background: #eee; display: flex; align-items: center; }
.c { width: 30px; height: 30px; display: flex; align-items: center; justify-content: center; flex: none; }
.c svg { width: 24px; height: 24px; }
.c.g, .sp.g { margin-left: 2px; }
.c.h1 { margin-left: 1px; }
.c.h3 { margin-left: 3px; }
.c.on { background: #f8f8f8; border: 1px solid #cfcfcf; border-radius: 3px; }
.dd { width: 12px; height: 4px; flex: none; position: relative; }
.dd::after { content: ""; position: absolute; left: 3px; top: 0; border: 3px solid transparent; border-top: 4px solid #222; border-bottom: 0; }
.sp { width: 8px; height: 26px; flex: none; background: linear-gradient(#c8c8c8, #c8c8c8) center/1px 100% no-repeat; }
.sp.w12 { width: 12px; }
.sp.w10 { width: 10px; }
.tg { color: #5fb03c; }
.to { color: #eda21f; }
.tr { color: #dd4f1d; }
.tb { color: #2f74c8; }

.addr { height: 23px; background: #fff; display: flex; align-items: center; margin-right: 3px; padding-left: 6px; }
.addr span { margin-left: 3px; }
.chev { width: 12px; height: 7px; margin-left: auto; margin-right: 3px; }
.ic { width: 16px; height: 18px; flex: none; }

.main { flex: 1; min-height: 0; display: flex; }

.tree { width: 248px; flex: none; background: #f0f0f0; padding: 4px 0 0 2px; position: relative; }
.hl { position: absolute; left: 30px; top: 614px; width: 215px; height: 105px; background: #f7f7f7; border: 1px solid #e6e6e6; }
.n { height: 21px; display: flex; align-items: center; position: relative; white-space: nowrap; }
.n > i, .n > b { width: 10px; height: 21px; flex: none; position: relative; display: block; }
.n > .ic { margin-left: 3px; }
.n > span { margin-left: 3px; }
.v, .p, .m, .t { background: linear-gradient(#bdbdbd, #bdbdbd) 4px 0/1px 100% no-repeat; }
.lp, .lm, .l { background: linear-gradient(#bdbdbd, #bdbdbd) 4px 0/1px 11px no-repeat; }
.t, .l { background-image: linear-gradient(#bdbdbd, #bdbdbd), linear-gradient(#bdbdbd, #bdbdbd); background-position: 4px 0, 4px 10px; background-size: 1px 100%, 8px 1px; background-repeat: no-repeat; }
.l { background-size: 1px 11px, 8px 1px; }
.p::before, .m::before, .lp::before, .lm::before { content: ""; position: absolute; left: 0; top: 6px; width: 9px; height: 9px; }
.m::before, .lm::before { background: linear-gradient(#fff, #fff) center/5px 1px no-repeat, #8f9fbd; }
.p::before, .lp::before { background: linear-gradient(#fff, #fff) center/5px 1px no-repeat, linear-gradient(#fff, #fff) center/1px 5px no-repeat, #8f9fbd; }
.faded { opacity: .45; }

.center { width: 1392px; flex: none; display: flex; flex-direction: column; position: relative; background: #f0f0f0; }
.tabs { height: 27px; flex: none; background: #efefef; display: flex; align-items: flex-end; }
.tabs.two { height: 29px; }
.tab { height: 22px; display: flex; align-items: center; position: relative; background: #f0f0f0; border: 1px solid #d8d8d8; border-bottom: 0; border-left: 0; padding-left: 3px; }
.tab.act { height: 25px; background: #fff; border: 1px solid #d4d4d4; border-bottom: 0; font-weight: 700; padding-left: 4px; }
.tab .ic { color: #444; }
.tab span { margin-left: 5px; }
.w1 { width: 119px; }
.w2 { width: 79px; }
.w3 { width: 72px; }
.w4 { width: 83px; }
.w5 { width: 191px; background: #f0f0f0 !important; }
.x { position: absolute; right: 3px; top: 2px; width: 11px; height: 11px; background: #d9d9d9; }
.x::after { content: ""; position: absolute; inset: 2px; background: linear-gradient(45deg, transparent 46%, #fff 46% 54%, transparent 54%), linear-gradient(-45deg, transparent 46%, #fff 46% 54%, transparent 54%); }
.act .x { top: 3px; right: 2px; }
.plus { margin-left: 7px; color: #777; font-size: 16px; line-height: 22px; align-self: flex-end; }
.tri { margin-left: 9px; margin-bottom: 8px; border: 5px solid transparent; border-top: 6px solid #777; border-bottom: 0; }

.bar { height: 23px; flex: none; display: flex; align-items: center; color: #eef3fb; font-weight: 600; }
.blue { background: #4c8ad9; }
.steel { background: #7aa5c7; color: #fff; }
.steel .b2 { margin-left: 6px; }
.steel span { margin-left: 6px; }
.taupe { background: #b5b1ad; color: #f5f3f0; letter-spacing: .14px; }
.burger { width: 13px; height: 11px; margin-left: 7px; flex: none; background: repeating-linear-gradient(#fff 0 2px, transparent 2px 4.5px); }
.b1 { margin-left: 12px; }
.ar { width: 0; height: 0; border: 4px solid transparent; border-left: 4px solid #fff; border-right: 0; flex: none; }
.a1 { margin-left: 13px; margin-right: 7px; }
.a2 { margin: 0 9px 0 11px; }
.b3 { margin-left: 13px; }
.c1 { margin: 0 9px 0 11px; }
.c2 { margin: 0 8px 0 10px; }

.hdr, .row { display: grid; white-space: nowrap; }
.g1 { grid-template-columns: 25px 150px 333px 42px 169px 119px 89px 87px 58px 90px 81px 65px; }
.g2 { grid-template-columns: 25px 333px 43px 47px 132px 57px 127px 83px 64px; }
.hdr { height: 25px; flex: none; background: #fff; color: #5b6b80; line-height: 24px; }
.hdr span { border-right: 1px solid #e4e4e4; padding: 0 6px; position: relative; }
.hdr .r { text-align: right; padding-right: 5px; }
.hdr .srt::before { content: ""; position: absolute; left: 17px; top: 8px; width: 6px; height: 6px; border: solid #5b6b80; border-width: 0 1.500px 1.500px 0; transform: rotate(45deg); }
.g2.hdr .srt::before { left: 59px; }

.list { flex: none; overflow: hidden; padding-top: 2px; }
.one { height: 503px; background: linear-gradient(90deg, #fff 0 24px, #eee 24px 25px, #fff 25px 838px, #fbfbfb 838px 927px, #fff 927px); }
.low { height: 537px; background: linear-gradient(90deg, #fff 0 24px, #e8e8e8 24px 25px, #f5f5f5 25px); }
.row { height: 21px; line-height: 21px; }
.row > span { padding: 0 6px; overflow: hidden; }
.row > .num { color: #8a8a8a; text-align: right; padding-right: 5px; }
.row > .r { text-align: right; padding-right: 5px; }
.row > .mod { padding-left: 17px; padding-right: 0; letter-spacing: -.15px; }
.row > .cre { padding-left: 16px; padding-right: 0; letter-spacing: -.15px; }
.row > .nm { display: flex; align-items: center; padding: 0 0 0 5px; }
.cb { width: 13px; height: 13px; border: 1px solid #333; background: #fff; flex: none; }
.doc { width: 12px; height: 16px; margin-left: 6px; flex: none; }
.doc + span { margin-left: 6px; }
.foc { border: 1px solid #99d1ff; margin-left: 3px !important; padding: 0 4px 0 2px; height: 21px; line-height: 19px; }

.status { height: 28px; flex: none; background: #efefef; display: flex; align-items: center; position: relative; line-height: 19px; }
.sbox { width: 140px; height: 21px; background: #fff; padding-left: 4px; margin-top: -2px; }
.mag { width: 16px; height: 17px; margin-top: 2px; display: block; }
.st1 { margin-left: 5px; width: 201px; height: 21px; }
.st2 { width: 326px; border-left: 1px solid #ccc; padding-left: 4px; height: 21px; }
.st3 { display: flex; align-items: center; border-left: 1px solid #ccc; padding: 0 0 2px 4px; height: 21px; gap: 2px; }
.st4 { margin-left: auto; display: flex; gap: 9px; padding-right: 4px; }
.stico { width: 14px; height: 14px; display: block; }
.itabs { height: 24px; flex: none; display: flex; border-top: 1px solid #cfcfcf; background: linear-gradient(#cfcfcf, #cfcfcf) bottom/100% 1px no-repeat, #efefef; }
.itabs span { text-align: center; border-right: 1px solid #d8d8d8; line-height: 21px; background: linear-gradient(#cfcfcf, #cfcfcf) bottom/100% 1px no-repeat; }
.itabs .on { font-weight: 700; background: #f4f4f4; }
.w74 { width: 74px; } .w58 { width: 58px; } .w46 { width: 46px; } .w61 { width: 61px; } .w72 { width: 72px; } .w41 { width: 41px; } .w65 { width: 65px; } .w56 { width: 56px; }
.ipanel { flex: 1; background: #f0f0f0; border-left: 1px solid #d8d8d8; }
.blob { position: absolute; left: 330px; top: 399px; width: 23px; height: 30px; overflow: visible; }

.gut { width: 4px; flex: none; background: #ececec; }
.cat { flex: 1; background: #fff; padding-top: 2px; border-right: 1px solid #ddd; }
.h { height: 21px; background: #f7f7f7; border-top: 1px solid #e2e2e2; display: flex; align-items: center; padding-left: 7px; font-weight: 700; white-space: nowrap; }
.bx { width: 9px; height: 9px; border: 1px solid #888; flex: none; background: linear-gradient(#555, #555) center/5px 1px no-repeat, #fafafa; }
.bx.p2 { background: linear-gradient(#555, #555) center/5px 1px no-repeat, linear-gradient(#555, #555) center/1px 5px no-repeat, #fafafa; }
.h > span { margin-left: 7px; }
.h .hi { margin-left: 7px; }
.h .hi + span { margin-left: 5px; }
.it { height: 21px; background: #fff; display: flex; align-items: center; padding-left: 18px; white-space: nowrap; position: relative; }
.it > span { flex: 1; margin-left: 1px; padding-left: 3px; }
.sel > span { background: #d6d6d6; }
.sel::before { content: ""; position: absolute; left: 0; top: 0; width: 4px; height: 21px; background: #a4a4a4; }
.doc2 { width: 16px; height: 16px; flex: none; }
```
